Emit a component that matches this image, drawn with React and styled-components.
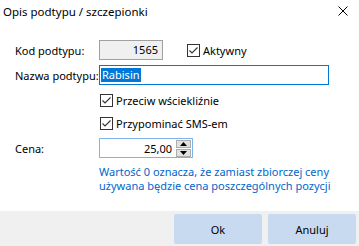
import React from 'react';
import styled, { createGlobalStyle } from 'styled-components';

const GlobalStyle = createGlobalStyle`
  html, body { margin: 0; padding: 0; background: #fff; }
  body {
    font-family: "Noto Sans", "Open Sans", sans-serif;
    font-size: 11px;
    color: #000;
  }
`;

const Window = styled.div`
  width: 359px;
  height: 246px;
  display: flex;
  flex-direction: column;
  background: #fff;
  overflow: hidden;
`;

const TitleBar = styled.div`
  height: 22px;
  display: flex;
  align-items: center;
  justify-content: space-between;
  padding: 0 11px 0 3px;
`;

const Title = styled.span`
  white-space: nowrap;
  font-size: 11.5px;
`;

const Content = styled.div`
  padding-top: 18px;
  display: flex;
  flex-direction: column;
`;

const Row = styled.div`
  display: flex;
  align-items: center;
  height: ${p => p.h || 20}px;
  margin-top: ${p => p.mt || 0}px;
  padding-left: ${p => p.indent || 15}px;
`;

const Label = styled.label`
  width: 84px;
  flex-shrink: 0;
  white-space: nowrap;
`;

const ReadField = styled.div`
  box-sizing: border-box;
  width: 64px;
  height: 20px;
  border: 1px solid #a0a0a0;
  background: #f0f0f0;
  text-align: right;
  padding-right: 4px;
  line-height: 18px;
`;

const TextField = styled.div`
  box-sizing: border-box;
  width: ${p => p.w}px;
  height: 20px;
  border: 1px solid ${p => p.border || '#0078d7'};
  background: #fff;
  display: flex;
  align-items: center;
  padding-left: 1px;
`;

const Selected = styled.span`
  background: #0078d7;
  color: #fff;
  line-height: 14px;
  padding: 0 1px;
`;

const CheckWrap = styled.div`
  display: flex;
  align-items: center;
  gap: 3px;
  margin-left: ${p => p.ml || 0}px;
`;

const Box = styled.span`
  box-sizing: border-box;
  width: 13px;
  height: 13px;
  border: 1px solid #333;
  background: #fff;
  display: inline-flex;
  align-items: center;
  justify-content: center;
`;

const NumValue = styled.span`
  flex: 1;
  text-align: right;
  padding-right: 4px;
`;

const Spinner = styled.div`
  display: flex;
  flex-direction: column;
  gap: 1px;
  margin-right: 1px;
`;

const SpinBtn = styled.div`
  box-sizing: border-box;
  width: 15px;
  height: 8px;
  border: 1px solid #adadad;
  background: #e1e1e1;
  display: flex;
  align-items: center;
  justify-content: center;
`;

const Help = styled.div`
  margin-top: 7px;
  padding-left: 99px;
  color: #0066cc;
  line-height: 14px;
`;

const Footer = styled.div`
  margin-top: auto;
  height: 35px;
  box-sizing: border-box;
  background: #f0f0f0;
  display: flex;
  justify-content: flex-end;
  gap: 6px;
  padding: 3px 3px 0 0;
`;

const Button = styled.button`
  width: 88px;
  height: 30px;
  border: none;
  border-radius: 2px;
  background: #c8daef;
  font: inherit;
  color: #000;
  padding: 0;
`;

const Check = ({ label, ml }) => (
  <CheckWrap ml={ml}>
    <Box>
      <svg width="11" height="11" viewBox="0 0 11 11">
        <path d="M1.5 5.5 L4 8 L9.5 2.5" fill="none" stroke="#333" strokeWidth="1.1" />
      </svg>
    </Box>
    <span>{label}</span>
  </CheckWrap>
);

export default function App() {
  return (
    <Window>
      <GlobalStyle />
      <TitleBar>
        <Title>Opis podtypu / szczepionki</Title>
        <svg width="10" height="10" viewBox="0 0 10 10">
          <path d="M0.5 0.5 L9.5 9.5 M9.5 0.5 L0.5 9.5" stroke="#000" strokeWidth="1" />
        </svg>
      </TitleBar>
      <Content>
        <Row>
          <Label>Kod podtypu:</Label>
          <ReadField>1565</ReadField>
          <Check label="Aktywny" ml={24} />
        </Row>
        <Row mt={5}>
          <Label>Nazwa podtypu:</Label>
          <TextField w={230}>
            <Selected>Rabisin</Selected>
          </TextField>
        </Row>
        <Row mt={9} h={13} indent={100}>
          <Check label="Przeciw wściekliźnie" />
        </Row>
        <Row mt={10} h={13} indent={100}>
          <Check label="Przypominać SMS-em" />
        </Row>
        <Row mt={8}>
          <Label>Cena:</Label>
          <TextField w={94} border="#7eb4ea">
            <NumValue>25,00</NumValue>
            <Spinner>
              <SpinBtn>
                <svg width="7" height="4" viewBox="0 0 7 4"><path d="M3.5 0 L7 4 L0 4 Z" fill="#000" /></svg>
              </SpinBtn>
              <SpinBtn>
                <svg width="7" height="4" viewBox="0 0 7 4"><path d="M0 0 L7 0 L3.5 4 Z" fill="#000" /></svg>
              </SpinBtn>
            </Spinner>
          </TextField>
        </Row>
        <Help>
          Wartość 0 oznacza, że zamiast zbiorczej ceny<br />
          używana będzie cena poszczególnych pozycji
        </Help>
      </Content>
      <Footer>
        <Button>Ok</Button>
        <Button>Anuluj</Button>
      </Footer>
    </Window>
  );
}
